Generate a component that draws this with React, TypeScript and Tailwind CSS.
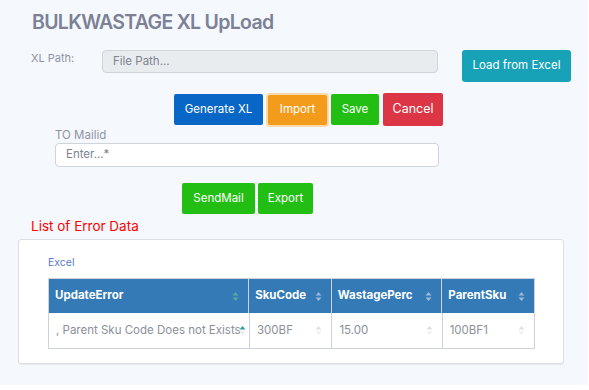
import React from "react";

const font = { fontFamily: "Inter, 'Open Sans', sans-serif" };

function SortIcon({ up = "#8fb0d6", down = "#8fb0d6" }: { up?: string; down?: string }) {
  return (
    <svg width="7" height="11" viewBox="0 0 7 11" className="shrink-0">
      <path d="M3.5 1 L6.5 4.5 L0.5 4.5 Z" fill={up} />
      <path d="M3.5 10 L6.5 6.5 L0.5 6.5 Z" fill={down} />
    </svg>
  );
}

export default function App() {
  const headers = [
    { label: "UpdateError", w: "w-[200px]", up: "#5aa6a6", down: "#5aa6a6" },
    { label: "SkuCode", w: "w-[83px]" },
    { label: "WastagePerc", w: "w-[111px]" },
    { label: "ParentSku", w: "w-[93px]" },
  ];
  const cells = [", Parent Sku Code Does not Exists", "300BF", "15.00", "100BF1"];
  return (
    <div className="w-[588px] h-[385px] bg-[#f5f8fd] overflow-hidden" style={font}>
      <div className="pl-[32px] pt-[8px] text-[19.5px] leading-[28px] font-semibold text-[#7c8196] tracking-[-0.7px]">
        BULKWASTAGE XL UpLoad
      </div>

      <div className="flex items-start mt-[14px]">
        <div className="pl-[31px] w-[102px] text-[11px] leading-[16px] text-[#8e94a3]">XL Path:</div>
        <div className="w-[336px] h-[23px] bg-[#e9ecef] border border-[#ced4da] rounded-[4px] pl-[10px] flex items-center text-[11.5px] text-[#7d8390]">
          File Path...
        </div>
        <button className="ml-[24px] w-[109px] h-[32px] bg-[#17a2b8] rounded-[3px] text-white text-[11.5px] flex items-center justify-center">
          Load from Excel
        </button>
      </div>

      <div className="flex items-center mt-[11px] pl-[174px] gap-[3px]">
        <button className="w-[89px] h-[31px] bg-[#0866c6] rounded-[2px] text-white text-[11.5px] flex items-center justify-center">
          Generate XL
        </button>
        <button className="w-[59px] h-[30px] bg-[#f39c1c] rounded-[2px] text-white text-[11.5px] flex items-center justify-center shadow-[0_0_0_2px_#fbd9a9] ml-[2px] mr-[1px]">
          Import
        </button>
        <button className="w-[48px] h-[31px] bg-[#22be14] rounded-[2px] text-white text-[11.5px] flex items-center justify-center">
          Save
        </button>
        <button className="ml-[1px] w-[60px] h-[33px] bg-[#dc3545] rounded-[2px] text-white text-[12.5px] flex items-center justify-center">
          Cancel
        </button>
      </div>

      <div className="pl-[55px] mt-[1px] text-[11.5px] leading-[16px] text-[#8e94a3]">TO Mailid</div>
      <div className="ml-[55px] w-[384px] h-[24px] bg-white border border-[#ced4da] rounded-[4px] pl-[10px] flex items-center text-[11.5px] text-[#7d8390]">
        Enter...*
      </div>

      <div className="flex mt-[16px] pl-[182px] gap-[3px]">
        <button className="w-[73px] h-[31px] bg-[#22be14] rounded-[2px] text-white text-[11.5px] flex items-center justify-center">
          SendMail
        </button>
        <button className="w-[55px] h-[31px] bg-[#22be14] rounded-[2px] text-white text-[11.5px] flex items-center justify-center">
          Export
        </button>
      </div>

      <div className="pl-[31px] mt-[2px] text-[13.5px] leading-[20px] text-[#ff0000]">List of Error Data</div>

      <div className="ml-[18px] mt-[3px] w-[546px] h-[125px] bg-white border border-[#dcdfe4] rounded-[3px] shadow-[0_1px_1px_rgba(0,0,0,0.06)] pl-[29px] pt-[16px]">
        <div className="text-[10.5px] leading-[14px] text-[#5b79cf]">Excel</div>
        <div className="mt-[8px] w-[487px] border border-[#cfd3d8]">
          <div className="flex h-[34px] bg-[#337ab7]">
            {headers.map((h, i) => (
              <div
                key={h.label}
                className={`${h.w} flex items-center justify-between pl-[6px] pr-[9px] text-white text-[11.5px] font-bold ${i > 0 ? "border-l border-[#cfd3d8]" : ""}`}
              >
                <span>{h.label}</span>
                <SortIcon up={h.up ?? "#9cb9dc"} down={h.down ?? "#9cb9dc"} />
              </div>
            ))}
          </div>
          <div className="flex h-[35px] bg-white">
            {cells.map((c, i) => (
              <div
                key={i}
                className={`${headers[i].w} flex items-center justify-between pl-[7px] pr-[9px] text-[11.5px] text-[#8b909a] ${i > 0 ? "border-l border-[#cfd3d8]" : ""}`}
              >
                <span className="whitespace-nowrap">{c}</span>
                {i === 0 ? (
                  <svg width="7" height="11" viewBox="0 0 7 11" className="shrink-0 -ml-[2px]">
                    <path d="M3.5 1 L6.5 4.5 L0.5 4.5 Z" fill="#2a9ea6" />
                    <path d="M3.5 10 L6.5 6.5 L0.5 6.5 Z" fill="#e6e8eb" />
                  </svg>
                ) : (
                  <SortIcon up="#dcdfe3" down="#eef0f2" />
                )}
              </div>
            ))}
          </div>
        </div>
      </div>
      <div className="h-[10px]" />
    </div>
  );
}
